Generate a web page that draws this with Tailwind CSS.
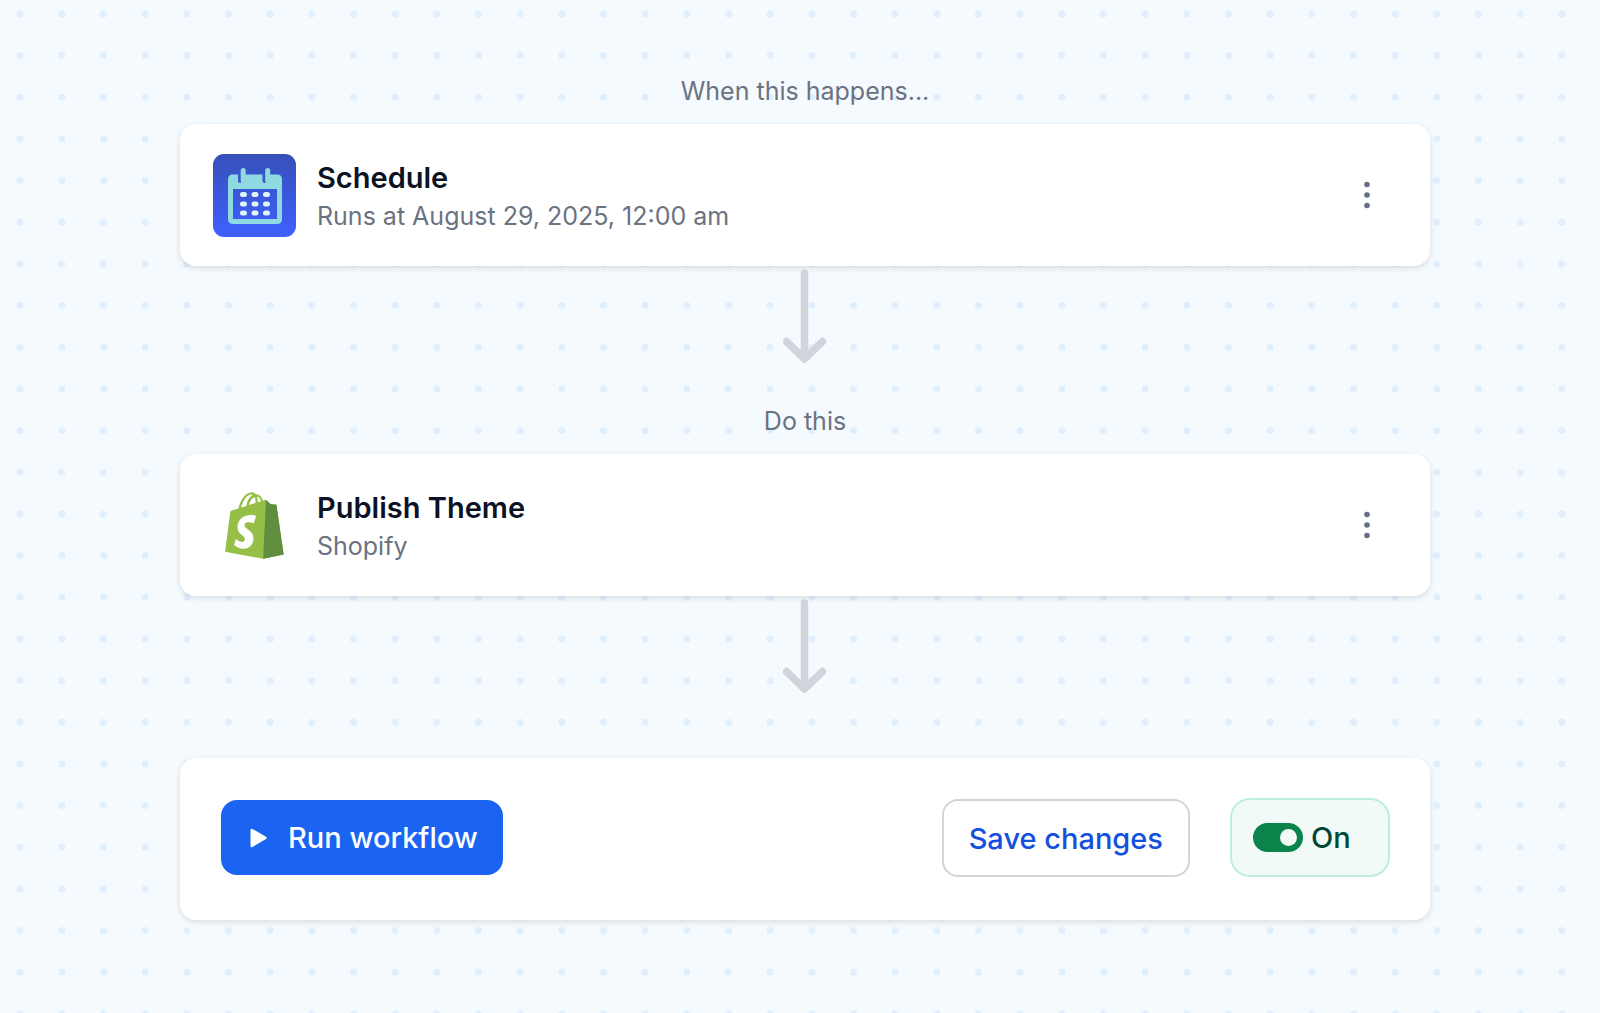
<!DOCTYPE html>
<html lang="en">
<head>
<meta charset="utf-8">
<meta name="viewport" content="width=device-width, initial-scale=1">
<title>Workflow</title>
<script src="https://cdn.jsdelivr.net/npm/@tailwindcss/browser@4"></script>
</head>
<body class="relative min-h-screen bg-[#f5faff] font-['Inter',sans-serif] text-[#6b7280]">
<!-- Dotted canvas -->
<svg class="absolute inset-0 h-full w-full" aria-hidden="true">
  <defs>
    <pattern id="dots" width="125" height="125" patternUnits="userSpaceOnUse">
      <g fill="#e0effe">
        <circle cx="20.2" cy="13.9" r="3.5"/><circle cx="61.8" cy="13.9" r="3.5"/><circle cx="103.5" cy="13.9" r="3.5"/>
        <circle cx="20.2" cy="55.5" r="3.5"/><circle cx="61.8" cy="55.5" r="3.5"/><circle cx="103.5" cy="55.5" r="3.5"/>
        <circle cx="20.2" cy="97.2" r="3.5"/><circle cx="61.8" cy="97.2" r="3.5"/><circle cx="103.5" cy="97.2" r="3.5"/>
      </g>
    </pattern>
  </defs>
  <rect width="100%" height="100%" fill="url(#dots)"/>
</svg>

<main class="relative flex flex-col pt-[73px] pr-[170px] pb-16 pl-[180px]">
  <p class="mb-[15px] text-center text-[25px] leading-9">When this happens...</p>
  <section class="flex h-[142px] items-center rounded-2xl bg-white pr-[43px] pl-[33px] shadow-[0_2px_6px_rgba(0,0,0,0.12)]">
    <svg class="size-[83px] shrink-0" viewBox="0 0 83 83" aria-hidden="true">
      <defs><linearGradient id="sky" x1="0" y1="0" x2="0" y2="1"><stop offset="0" stop-color="#3650b8"/><stop offset="1" stop-color="#4060ff"/></linearGradient></defs>
      <rect width="83" height="83" rx="11" fill="url(#sky)"/>
      <path fill="#8edae0" fill-rule="evenodd" d="M20 20.500H64Q69 20.500 69 25.500V65Q69 70 64 70H20Q15 70 15 65V25.500Q15 20.500 20 20.500ZM20 35V65H64V35Z"/>
      <path d="M27 20V27M51.500 20V27" stroke="#3c59c8" stroke-width="4" stroke-linecap="round"/>
      <path d="M30.200 16.500V26.500M54.700 16.500V26.500" stroke="#8edae0" stroke-width="5" stroke-linecap="round"/>
      <path d="M29.500 40.500h2M41 40.500h2M52.500 40.500h2M29.500 50h2M41 50h2M52.500 50h2M29.500 59h2M41 59h2M52.500 59h2" stroke="#dff7fb" stroke-width="5" stroke-linecap="round"/>
    </svg>
    <div class="ml-[21px] flex-1 pt-1">
      <h2 class="text-[29px] leading-[38px] font-semibold text-[#0b1225]">Schedule</h2>
      <p class="text-[25px] leading-[38px]">Runs at August 29, 2025, 12:00 am</p>
    </div>
    <button type="button" aria-label="Schedule options" class="flex size-10 items-center justify-center">
      <svg class="h-7 w-2" viewBox="0 0 8 28" fill="#667085"><circle cx="4" cy="3.500" r="2.800"/><circle cx="4" cy="14" r="2.800"/><circle cx="4" cy="24.500" r="2.800"/></svg>
    </button>
  </section>

  <svg class="mt-[3px] mb-10 h-[94px] w-11 self-center" viewBox="0 0 44 94" fill="none" stroke="#d1d5db" stroke-width="7.500" stroke-linecap="round" stroke-linejoin="round" aria-hidden="true"><path d="M21.500 4V89M3.500 72.500L21.500 90 39.500 72.500"/></svg>

  <p class="mb-[15px] text-center text-[25px] leading-9">Do this</p>
  <section class="flex h-[142px] items-center rounded-2xl bg-white pr-[43px] pl-[33px] shadow-[0_2px_6px_rgba(0,0,0,0.12)]">
    <div class="flex size-[83px] shrink-0 items-center justify-center">
      <svg class="h-[67px] w-[59px]" viewBox="0 0 256 292" aria-hidden="true">
        <path fill="#95bf46" d="M223.774 57.340c-.201-1.460-1.480-2.268-2.537-2.357-1.055-.088-23.383-1.743-23.383-1.743s-15.507-15.395-17.209-17.099c-1.703-1.703-5.029-1.185-6.320-.805-.19.056-3.388 1.043-8.678 2.680-5.180-14.906-14.322-28.604-30.405-28.604-.444 0-.901.018-1.358.044C129.310 3.407 123.644.779 118.750.779c-37.465 0-55.364 46.835-60.976 70.635-14.558 4.511-24.900 7.718-26.221 8.133-8.126 2.549-8.383 2.805-9.450 10.462C21.300 95.806.038 260.235.038 260.235l165.678 31.042 89.770-19.420S223.973 58.800 223.775 57.340zM156.490 40.848l-14.019 4.339c.005-.988.010-1.960.010-3.023 0-9.264-1.286-16.723-3.349-22.636 8.287 1.040 13.806 10.469 17.358 21.320zm-27.638-19.483c2.304 5.773 3.802 14.058 3.802 25.238 0 .572-.005 1.095-.010 1.624-9.117 2.824-19.024 5.890-28.953 8.966 5.575-21.516 16.025-31.908 25.161-35.828zm-11.131-10.537c1.617 0 3.246.549 4.805 1.622-12.007 5.650-24.877 19.880-30.312 48.297l-22.886 7.088C75.694 46.160 90.810 10.828 117.720 10.828z"/>
        <path fill="#5e8e3e" d="M221.237 54.983c-1.055-.088-23.383-1.743-23.383-1.743s-15.507-15.395-17.209-17.099c-.637-.634-1.496-.959-2.394-1.099l-12.527 256.233 89.762-19.418S223.972 58.800 223.774 57.340c-.201-1.460-1.480-2.268-2.537-2.357"/>
        <path fill="#fff" d="M135.242 104.585l-11.069 32.926s-9.698-5.176-21.586-5.176c-17.428 0-18.305 10.937-18.305 13.693 0 15.038 39.200 20.800 39.200 56.024 0 27.713-17.577 45.558-41.277 45.558-28.440 0-42.984-17.700-42.984-17.700l7.615-25.160s14.950 12.835 27.565 12.835c8.243 0 11.596-6.490 11.596-11.232 0-19.616-32.160-20.491-32.160-52.724 0-27.129 19.472-53.382 58.778-53.382 15.145 0 22.627 4.338 22.627 4.338"/>
      </svg>
    </div>
    <div class="ml-[21px] flex-1 pt-1">
      <h2 class="text-[29px] leading-[38px] font-semibold text-[#0b1225]">Publish Theme</h2>
      <p class="text-[25px] leading-[38px]">Shopify</p>
    </div>
    <button type="button" aria-label="Publish Theme options" class="flex size-10 items-center justify-center">
      <svg class="h-7 w-2" viewBox="0 0 8 28" fill="#667085"><circle cx="4" cy="3.500" r="2.800"/><circle cx="4" cy="14" r="2.800"/><circle cx="4" cy="24.500" r="2.800"/></svg>
    </button>
  </section>

  <svg class="mt-[3px] mb-[65px] h-[94px] w-11 self-center" viewBox="0 0 44 94" fill="none" stroke="#d1d5db" stroke-width="7.500" stroke-linecap="round" stroke-linejoin="round" aria-hidden="true"><path d="M21.500 4V89M3.500 72.500L21.500 90 39.500 72.500"/></svg>

  <section class="flex items-center rounded-2xl bg-white pt-10 pr-10 pb-[43px] pl-[41px] shadow-[0_2px_6px_rgba(0,0,0,0.12)]">
    <button type="button" class="flex h-[75px] items-center gap-[21px] rounded-2xl bg-[#1b64f2] pr-[25px] pl-7 text-[29px] font-medium text-white">
      <svg class="h-5 w-[18px]" viewBox="0 0 18 20" fill="currentColor" aria-hidden="true"><path d="M1.500 2.200Q1.500 0 3.500 1L17 8.800Q18.500 10 17 11L3.500 19Q1.500 20 1.500 18Z"/></svg>
      Run workflow
    </button>
    <button type="button" class="ml-auto h-[78px] rounded-2xl border-2 border-[#d1d5db] bg-white px-[25px] pt-0.5 text-[29px] font-medium text-[#1450e0]">Save changes</button>
    <label class="ml-10 flex h-[79px] w-[160px] items-center gap-2 rounded-[20px] border-2 border-[#bcf0da] bg-[#f1faf6] pl-[21px] text-[29px] font-medium text-[#014737]">
      <input type="checkbox" role="switch" checked class="flex h-[29px] w-[50px] appearance-none items-center justify-end rounded-full bg-[#0b844b] pr-1.5 before:size-[17px] before:rounded-full before:bg-[#f1faf6]">
      On
    </label>
  </section>
</main>
</body>
</html>
